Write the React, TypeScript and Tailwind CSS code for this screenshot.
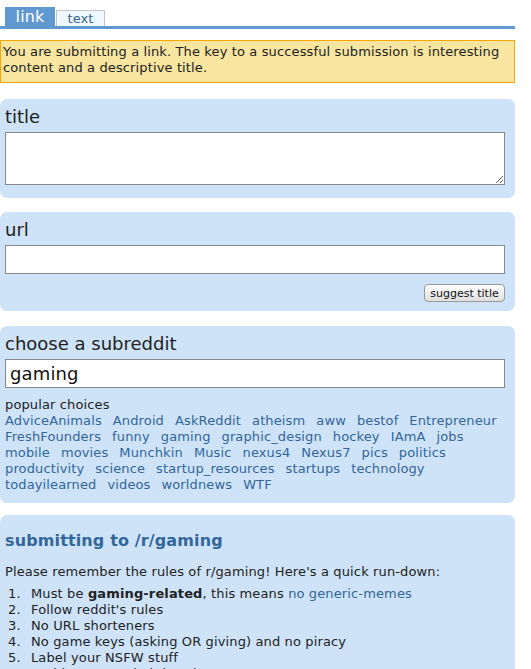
import React from 'react';

const popular = [
  ['AdviceAnimals', 'Android', 'AskReddit', 'atheism', 'aww', 'bestof', 'Entrepreneur'],
  ['FreshFounders', 'funny', 'gaming', 'graphic_design', 'hockey', 'IAmA', 'jobs'],
  ['mobile', 'movies', 'Munchkin', 'Music', 'nexus4', 'Nexus7', 'pics', 'politics'],
  ['productivity', 'science', 'startup_resources', 'startups', 'technology'],
  ['todayilearned', 'videos', 'worldnews', 'WTF'],
];

const rules: React.ReactNode[] = [
  <>
    Must be <b>gaming-related</b>, this means <a className="text-[#369]">no generic-memes</a>
  </>,
  "Follow reddit's rules",
  'No URL shorteners',
  'No game keys (asking OR giving) and no piracy',
  'Label your NSFW stuff',
  'No bigotry or witch-hunting',
];

function Field({ label, children, pb = 'pb-[13px]' }: { label: string; children: React.ReactNode; pb?: string }) {
  return (
    <div className={`rounded-[7px] bg-[#cee3f8] pl-[5px] pr-[10px] pt-[7px] ${pb}`}>
      <div className="text-[18px] leading-[22px] text-[#222] mb-[4px] tracking-normal">{label}</div>
      {children}
    </div>
  );
}

export default function App() {
  return (
    <div className="w-[515px] font-['DejaVu_Sans',sans-serif] text-[13px] tracking-[0.13px] text-[#222] bg-white">
      {/* tabs */}
      <div className="mt-[7px] flex items-end gap-[1px] border-b-[3px] border-[#5f99cf] pl-[5px]">
        <span className="bg-[#5f99cf] text-white text-[16px] w-[50px] h-[19px] leading-[19px] text-center">link</span>
        <span className="bg-[#eff7ff] border border-b-0 border-[#c4c4c4] text-[#369] text-[13px] w-[49px] h-[16px] leading-[16px] text-center">
          text
        </span>
      </div>

      {/* info */}
      <div className="mt-[11px] border border-[#ffa500] bg-[#f7e5a0] px-[2px] pt-[3px] pb-[6px] leading-[16px]">
        You are submitting a link. The key to a successful submission is interesting content and a descriptive title.
      </div>

      <div className="mt-[16px]">
        <Field label="title">
          <textarea className="block w-[500px] h-[53px] border border-[#888] bg-white" />
        </Field>
      </div>

      <div className="mt-[14px]">
        <Field label="url" pb="pb-[9px]">
          <input className="block w-[500px] h-[29px] border border-[#888] bg-white" />
          <div className="mt-[10px] flex justify-end">
            <button className="h-[18px] w-[81px] rounded-[4px] border border-[#9a9a9a] bg-gradient-to-b from-white to-[#dedede] text-[11px] leading-[15px] tracking-normal text-[#111]">
              suggest title
            </button>
          </div>
        </Field>
      </div>

      <div className="mt-[15px]">
        <Field label="choose a subreddit" pb="pb-[10px]">
          <input
            className="block w-[500px] h-[29px] border border-[#888] bg-white px-[4px] text-[18px] text-[#111]"
            defaultValue="gaming"
          />
          <div className="mt-[9px] leading-[16px]">
            <div>popular choices</div>
            {popular.map((row, i) => (
              <div key={i} className="flex gap-x-[11px] text-[#369]">
                {row.map((s) => (
                  <a key={s}>{s}</a>
                ))}
              </div>
            ))}
          </div>
        </Field>
      </div>

      {/* subreddit rules */}
      <div className="mt-[12px] rounded-[7px] bg-[#cee3f8] pl-[5px] pr-[10px] pt-[16px] pb-[12px]">
        <h1 className="text-[16px] font-bold leading-[20px] text-[#369]">submitting to /r/gaming</h1>
        <p className="mt-[13px] leading-[16px]">Please remember the rules of r/gaming! Here's a quick run-down:</p>
        <ol className="mt-[6px] leading-[16px]">
          {rules.map((r, i) => (
            <li key={i} className="flex">
              <span className="w-[26px] pl-[3px]">{i + 1}.</span>
              <span>{r}</span>
            </li>
          ))}
        </ol>
      </div>
    </div>
  );
}
